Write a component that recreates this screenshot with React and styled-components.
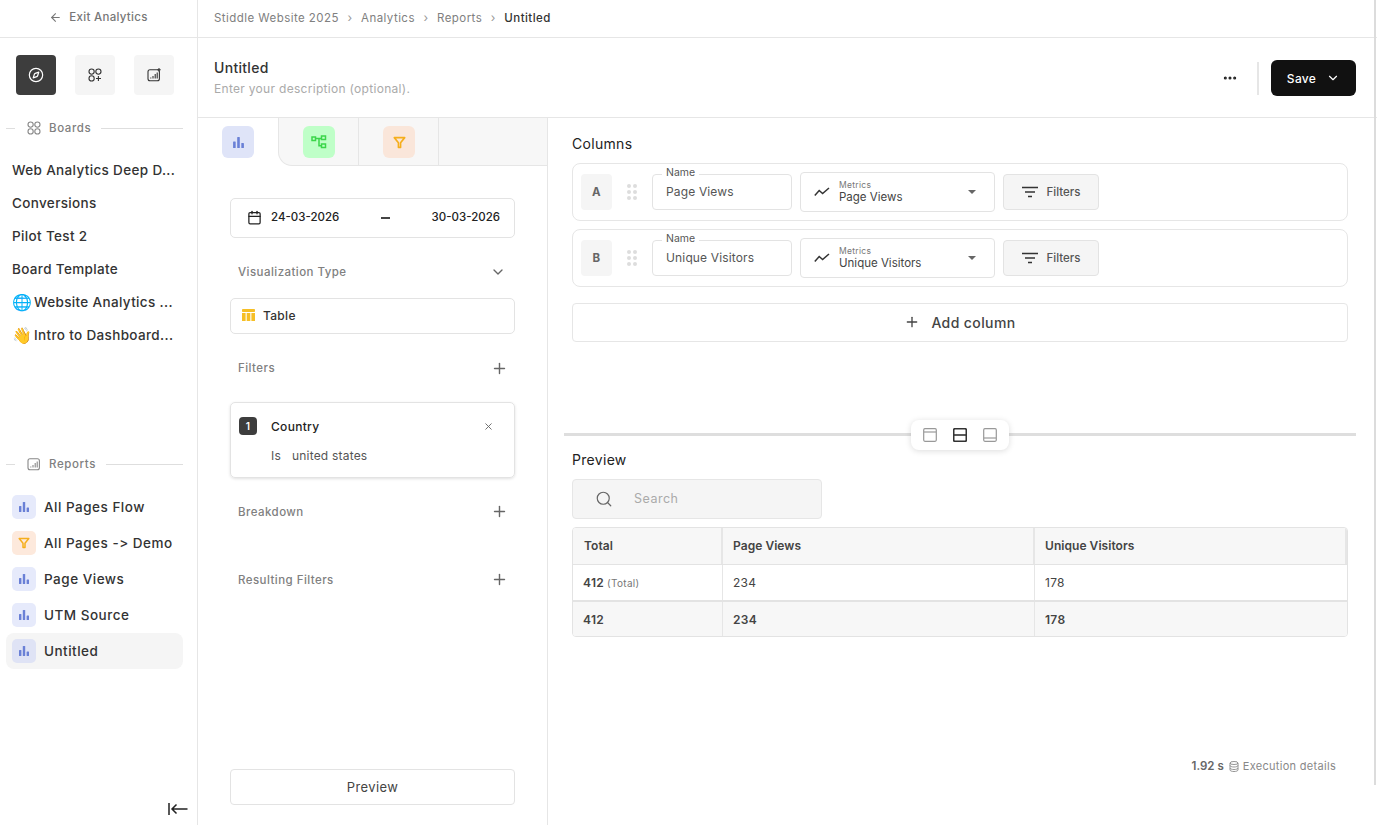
import styled, { createGlobalStyle } from "styled-components";
import { Compass, ArrowLeft, ChevronDown, Plus, X, Search, Calendar, Ellipsis } from "lucide-react";

const GlobalStyle = createGlobalStyle`
    html, body {
        margin:0;
        padding:0;
        height:100%;
        background:#fff;
    }
    body {
        font-family:Inter, "Open Sans", sans-serif;
        color:#1c1c1c;
        font-size:12px;
        letter-spacing:0.3px;
    }
    * {
        box-sizing:border-box;
    }
`;

const Page = styled.div`
    position:relative;
    display:flex;
    width:100%;
    height:825px;
    overflow:hidden;
`;

const Scrollbar = styled.div`
    position:absolute;
    top:0;
    right:1px;
    width:2px;
    height:785px;
    background:#dcdcdc;
`;

/* sidebar */
const Sidebar = styled.aside`
    width:198px;
    flex:none;
    display:flex;
    flex-direction:column;
    border-right:1px solid #e6e6e6;
    padding-bottom:6px;
`;

const ExitRow = styled.div`
    height:38px;
    flex:none;
    display:flex;
    align-items:center;
    justify-content:center;
    gap:7px;
    padding-bottom:3px;
    color:#777;
    font-size:11.5px;
    font-weight:500;
    border-bottom:1px solid #e6e6e6;
`;

const ModeRow = styled.div`
    display:flex;
    gap:19px;
    padding:17px 0 0 16px;
`;

const ModeButton = styled.div`
    width:40px;
    height:40px;
    border-radius:4px;
    display:flex;
    align-items:center;
    justify-content:center;
    background:${p => (p.$active ? "#3d3d3d" : "#f5f5f5")};
    color:${p => (p.$active ? "#fff" : "#333")};
`;

const SectionHead = styled.div`
    display:flex;
    align-items:center;
    height:18px;
    margin:${p => p.$margin};
    padding:0 14px 0 6px;
    color:#808080;
    font-size:11.5px;
    font-weight:500;
    letter-spacing:0.6px;

    &::before {
        content:"";
        width:9px;
        height:1px;
        background:#dedede;
        margin-right:12px;
    }
    &::after {
        content:"";
        flex:1;
        height:1px;
        background:#dedede;
        margin-left:10px;
    }
    svg {
        margin-right:8px;
    }
`;

const BoardList = styled.div`
    display:flex;
    flex-direction:column;
    margin-top:16px;
    padding-left:12px;
`;

const BoardItem = styled.div`
    height:33px;
    display:flex;
    align-items:center;
    font-size:13.5px;
    font-weight:500;
    letter-spacing:0.35px;
    color:#333;
    white-space:nowrap;
`;

const BoardEmoji = styled.span`
    width:22px;
    flex:none;
    font-size:16px;
    letter-spacing:0;
`;

const ReportList = styled.div`
    display:flex;
    flex-direction:column;
    margin-top:16px;
    padding:0 14px 0 6px;
`;

const ReportItem = styled.div`
    height:36px;
    display:flex;
    align-items:center;
    gap:8px;
    padding-left:6px;
    border-radius:8px;
    font-size:13.5px;
    font-weight:500;
    letter-spacing:0.5px;
    color:#333;
    background:${p => (p.$active ? "#f5f5f5" : "transparent")};
`;

const TypeIcon = styled.span`
    width:${p => p.$size}px;
    height:${p => p.$size}px;
    flex:none;
    display:flex;
    align-items:center;
    justify-content:center;
    border-radius:${p => (p.$size > 24 ? 6 : 5)}px;
    background:${p => p.$bg};
`;

const CollapseButton = styled.div`
    margin-top:auto;
    align-self:flex-end;
    margin-right:9px;
    height:20px;
    display:flex;
    align-items:center;
`;

/* main column */
const Main = styled.main`
    flex:1;
    min-width:0;
    display:flex;
    flex-direction:column;
`;

const Breadcrumbs = styled.nav`
    height:38px;
    flex:none;
    display:flex;
    align-items:center;
    gap:7.5px;
    padding:0 16px 2px;
    border-bottom:1px solid #e6e6e6;
    color:#808080;
    font-size:11.5px;
    font-weight:400;
    letter-spacing:0.45px;

    b {
        color:#333;
        font-weight:500;
    }
`;

const Crumb = styled.span`
    color:#999;
    font-size:12px;
    margin:0 1px;
`;

const TitleBar = styled.header`
    height:80px;
    flex:none;
    display:flex;
    align-items:center;
    padding:1px 21px 0 16px;
    border-bottom:1px solid #e6e6e6;
`;

const TitleText = styled.div`
    flex:1;

    h1 {
        margin:0 0 4px;
        font-size:14px;
        line-height:18px;
        font-weight:500;
        color:#333;
    }
    p {
        margin:0;
        font-size:12px;
        line-height:16px;
        color:#aaa;
    }
`;

const TitleDivider = styled.span`
    width:2px;
    height:33px;
    margin:0 12px 0 19px;
    background:#e6e6e6;
`;

const SaveButton = styled.button`
    width:85px;
    height:36px;
    border:none;
    border-radius:6px;
    background:#111;
    color:#fff;
    display:flex;
    align-items:center;
    justify-content:center;
    gap:10px;
    font:500 12px Inter, sans-serif;
    letter-spacing:0.3px;
`;

const Body = styled.div`
    flex:1;
    min-height:0;
    display:flex;
`;

/* config panel */
const ConfigPanel = styled.section`
    width:350px;
    flex:none;
    display:flex;
    flex-direction:column;
    border-right:1px solid #e6e6e6;
`;

const Tabs = styled.div`
    height:48px;
    flex:none;
    display:flex;
    background:#fff;
`;

const Tab = styled.div`
    width:${p => p.$width}px;
    display:flex;
    align-items:flex-start;
    padding:8px 0 0 ${p => p.$pad}px;
    background:${p => (p.$active ? "#fff" : "#f7f7f7")};
    border-bottom:${p => (p.$active ? "none" : "1px solid #e6e6e6")};
    border-right:${p => (p.$active ? "none" : "1px solid #e6e6e6")};
    border-left:${p => (p.$first ? "1px solid #e6e6e6" : "none")};
    border-bottom-left-radius:${p => (p.$first ? "14px" : "0")};
`;

const TabFill = styled.div`
    flex:1;
    background:#f7f7f7;
    border-bottom:1px solid #e6e6e6;
`;

const ConfigBody = styled.div`
    flex:1;
    min-height:0;
    display:flex;
    flex-direction:column;
    padding:32px 32px 20px;
`;

const DateBox = styled.div`
    height:40px;
    flex:none;
    display:flex;
    align-items:center;
    padding:0 14px 2px 16px;
    border:1px solid #e3e3e3;
    border-radius:5px;
    font-size:11.5px;
    font-weight:500;
    letter-spacing:0;
    color:#222;

    span:nth-of-type(1) {
        margin-left:9px;
    }
    i {
        width:9px;
        height:2px;
        margin:2px auto 0;
        background:#444;
    }
`;

const SectionRow = styled.div`
    height:${p => p.$height}px;
    flex:none;
    display:flex;
    align-items:center;
    justify-content:space-between;
    padding:${p => p.$top || 0}px 7px 0 8px;
    color:#808080;
    font-size:11.5px;
    font-weight:500;
    letter-spacing:0.45px;
`;

const RowChevron = styled(ChevronDown)`
    margin-right:2px;
    color:#666;
`;

const TableBox = styled.div`
    height:36px;
    flex:none;
    display:flex;
    align-items:center;
    gap:8px;
    padding:0 0 2px 11px;
    border:1px solid #e3e3e3;
    border-radius:5px;
    font-size:12px;
    font-weight:500;
    color:#333;
`;

const FilterCard = styled.div`
    height:76px;
    flex:none;
    padding:14px 20px 0 8px;
    border:1px solid #e3e3e3;
    border-radius:5px;
    box-shadow:0 1px 3px rgba(0,0,0,0.12);
`;

const FilterHead = styled.div`
    display:flex;
    align-items:center;
    height:18px;
    font-size:12px;
    font-weight:500;
    color:#222;

    svg {
        margin-left:auto;
        color:#666;
    }
`;

const Badge = styled.span`
    width:18px;
    height:18px;
    margin-right:14px;
    border-radius:4px;
    background:#3d3d3d;
    color:#fff;
    font-size:10px;
    font-weight:600;
    display:flex;
    align-items:center;
    justify-content:center;
`;

const FilterValue = styled.div`
    margin:13px 0 0 32px;
    font-size:12px;
    line-height:16px;
    letter-spacing:0.2px;
    color:#555;

    span {
        margin-right:11px;
    }
`;

const OutlineButton = styled.div`
    margin-top:auto;
    height:36px;
    flex:none;
    display:flex;
    align-items:center;
    justify-content:center;
    border:1px solid #e3e3e3;
    border-radius:4px;
    font-size:13px;
    letter-spacing:0.4px;
    color:#444;
`;

/* right side */
const Workspace = styled.section`
    flex:1;
    min-width:0;
    display:flex;
    flex-direction:column;
`;

const ColumnsPane = styled.div`
    height:315px;
    flex:none;
    padding:16px 29px 0 24px;
`;

const PaneTitle = styled.h2`
    margin:0;
    font-size:14px;
    line-height:20px;
    font-weight:400;
    color:#222;
`;

const ColumnRow = styled.div`
    height:58px;
    margin-top:${p => p.$top}px;
    display:flex;
    align-items:center;
    padding:0 0 0 8px;
    border:1px solid #e6e6e6;
    border-radius:8px;
`;

const LetterBox = styled.span`
    width:31px;
    height:36px;
    border-radius:4px;
    background:#f5f5f5;
    color:#666;
    font-size:11.5px;
    font-weight:700;
    display:flex;
    align-items:center;
    justify-content:center;
`;

const Grip = styled.span`
    width:10px;
    margin:0 15px;
    display:grid;
    grid-template-columns:repeat(2,4px);
    gap:2px;

    i {
        width:4px;
        height:4px;
        border-radius:50%;
        background:#ddd;
    }
`;

const NameField = styled.div`
    position:relative;
    width:140px;
    height:36px;
    display:flex;
    align-items:center;
    padding:0 0 1px 13px;
    border:1px solid #e3e3e3;
    border-radius:4px;
    font-size:12px;
    letter-spacing:0.15px;
    color:#555;
`;

const FieldLegend = styled.span`
    position:absolute;
    top:-9px;
    left:9px;
    padding:0 4px;
    background:#fff;
    font-size:10.5px;
    line-height:13px;
    letter-spacing:0;
    color:#555;
`;

const MetricField = styled.div`
    width:195px;
    height:40px;
    margin-left:8px;
    display:flex;
    align-items:center;
    padding:0 18px 0 13px;
    border:1px solid #e3e3e3;
    border-radius:4px;

    div {
        margin-left:9px;
        flex:1;
    }
    small {
        display:block;
        font-size:8.5px;
        line-height:10px;
        color:#777;
    }
    span {
        display:block;
        font-size:11.5px;
        line-height:14px;
        letter-spacing:0;
        color:#444;
    }
    em {
        width:0;
        height:0;
        border-left:4px solid transparent;
        border-right:4px solid transparent;
        border-top:4px solid #666;
    }
`;

const FilterButton = styled.div`
    width:96px;
    height:36px;
    margin-left:8px;
    display:flex;
    align-items:center;
    justify-content:center;
    gap:9px;
    border:1px solid #e3e3e3;
    border-radius:4px;
    background:#f5f5f5;
    font-size:11.5px;
    font-weight:500;
    letter-spacing:0;
    color:#555;
`;

const AddColumn = styled.div`
    height:39px;
    margin-top:16px;
    display:flex;
    align-items:center;
    justify-content:center;
    gap:11px;
    padding-bottom:1px;
    border:1px solid #e6e6e6;
    border-radius:4px;
    font-size:14px;
    font-weight:500;
    letter-spacing:0.4px;
    color:#444;
`;

const SplitBar = styled.div`
    position:relative;
    height:3px;
    margin:0 21px 0 16px;
    flex:none;
    background:#dedede;
`;

const SplitToggle = styled.div`
    position:absolute;
    left:347px;
    top:-13px;
    width:98px;
    height:30px;
    display:flex;
    align-items:center;
    justify-content:center;
    gap:16px;
    background:#fff;
    border-radius:8px;
    box-shadow:0 1px 6px rgba(0,0,0,0.14);
`;

const PreviewPane = styled.div`
    flex:1;
    min-height:0;
    display:flex;
    flex-direction:column;
    padding:14px 29px 51px 24px;
`;

const SearchBox = styled.div`
    width:250px;
    height:40px;
    margin-top:9px;
    flex:none;
    display:flex;
    align-items:center;
    padding:0 0 1px 22px;
    gap:21px;
    border:1px solid #e6e6e6;
    border-radius:4px;
    background:#f5f5f5;
    color:#aaa;
    font-size:12.5px;
    letter-spacing:0.5px;

    svg {
        color:#666;
    }
`;

const DataTable = styled.div`
    margin-top:8px;
    flex:none;
    border:1px solid #e3e3e3;
    border-radius:4px;
    overflow:hidden;
`;

const DataRow = styled.div`
    display:grid;
    grid-template-columns:149px 312px 1fr;
    height:${p => p.$height}px;
    background:${p => (p.$shaded ? "#f7f7f7" : "#fff")};
    border-bottom:${p => p.$rule || "none"};
`;

const DataCell = styled.div`
    display:flex;
    align-items:center;
    gap:3px;
    padding-left:10px;
    font-size:12px;
    font-weight:${p => (p.$bold ? 600 : 400)};
    color:#444;
    border-left:${p => (p.$first ? "none" : "1px solid #e6e6e6")};

    small {
        font-size:10px;
        font-weight:400;
        color:#777;
    }
`;

const HeadCell = styled.div`
    display:flex;
    align-items:center;
    margin-left:${p => (p.$first ? 0 : -1)}px;
    padding:0 0 2px ${p => (p.$first ? 11 : 10)}px;
    font-size:12px;
    font-weight:600;
    letter-spacing:0.05px;
    color:#444;
    border-left:${p => (p.$first ? "none" : "2px solid #e6e6e6")};
    border-right:${p => (p.$last ? "2px solid #e6e6e6" : "none")};
`;

const ExecFooter = styled.div`
    margin-top:auto;
    padding-right:12px;
    display:flex;
    justify-content:flex-end;
    align-items:center;
    height:16px;
    color:#888;
    font-size:11px;

    b {
        margin-right:5px;
        font-size:11.5px;
        font-weight:600;
        letter-spacing:0;
        color:#666;
    }
    svg {
        margin-right:4px;
    }
`;

/* drawn icons */
function BarsIcon({ color = "#6a80d6", size = 12 }) {
    return (
        <svg width={size} height={size} viewBox="0 0 12 12" fill={color}>
            <rect x="1" y="5" width="2.4" height="6" rx="0.5" />
            <rect x="4.8" y="1" width="2.4" height="10" rx="0.5" />
            <rect x="8.6" y="6.5" width="2.4" height="4.5" rx="0.5" />
        </svg>
    );
}

function FunnelIcon({ size = 12 }) {
    return (
        <svg width={size} height={size} viewBox="0 0 12 12" fill="none" stroke="#f5ae1c" strokeWidth="1.5" strokeLinejoin="round">
            <path d="M1.2 1.5h9.6L7 6.2V10.5H5V6.2z" />
        </svg>
    );
}

function FlowIcon() {
    return (
        <svg width="16" height="14" viewBox="0 0 16 14" fill="none" stroke="#3bd64a" strokeWidth="1.5">
            <rect x="1" y="2" width="3.5" height="3.5" />
            <rect x="10.5" y="1" width="4" height="3.5" />
            <rect x="10.5" y="9" width="4" height="3.5" />
            <path d="M4.5 3.5h6M8 3.5v7.2h2.5" />
        </svg>
    );
}

function CirclesIcon({ size = 14, color = "currentColor", plus = false }) {
    return (
        <svg width={size} height={size} viewBox="0 0 14 14" fill="none" stroke={color} strokeWidth="1.1">
            <circle cx="3.6" cy="3.6" r="2.6" />
            <circle cx="10.4" cy="3.6" r="2.6" />
            <circle cx="3.6" cy="10.4" r="2.6" />
            {plus
                ? <path d="M10.4 8v5M8 10.5h5" />
                : <circle cx="10.4" cy="10.4" r="2.6" />}
        </svg>
    );
}

function ChartBoxIcon({ size = 14, color = "currentColor", plus = false }) {
    return (
        <svg width={size} height={size} viewBox="0 0 14 14" fill="none" stroke={color} strokeWidth="1.1">
            <rect x="1" y="1.8" width="11.4" height="11" rx="2" />
            <path d="M3.8 10.5v-1M6 10.5V8M8.2 10.5V6M10.2 10.5V4.4" />
            {plus && <path d="M12 0v3.4M10.3 1.7h3.4" />}
        </svg>
    );
}

function CollapseIcon() {
    return (
        <svg width="20" height="12" viewBox="0 0 20 12" fill="none" stroke="#222" strokeWidth="1.5">
            <path d="M1 0v12M19.5 6H4M8.5 1.5 4 6l4.5 4.5" />
        </svg>
    );
}

function TableIcon() {
    return (
        <svg width="13" height="12" viewBox="0 0 13 12" fill="#f6bf26">
            <rect width="13" height="3" rx="0.8" />
            <rect y="4" width="3.6" height="8" />
            <rect x="4.7" y="4" width="3.6" height="8" />
            <rect x="9.4" y="4" width="3.6" height="8" />
        </svg>
    );
}

function TrendIcon() {
    return (
        <svg width="16" height="10" viewBox="0 0 16 10" fill="none" stroke="#333" strokeWidth="1.5">
            <path d="M.8 8.5 5.2 3.5l3.4 3L15 1" />
        </svg>
    );
}

function FilterLines() {
    return (
        <svg width="16" height="12" viewBox="0 0 16 12" fill="none" stroke="#333" strokeWidth="1.4">
            <path d="M0 1.5h16M3 6h10M6 10.5h4" />
        </svg>
    );
}

function PaneIcon({ split, color }) {
    const y = split === "top" ? 4 : split === "bottom" ? 10 : 7;
    return (
        <svg width="14" height="14" viewBox="0 0 14 14" fill="none" stroke={color} strokeWidth={split === "middle" ? 1.6 : 1.2}>
            <rect x="0.7" y="0.7" width="12.6" height="12.6" rx="1.2" />
            <path d={`M1 ${y}h12`} />
        </svg>
    );
}

function DatabaseIcon() {
    return (
        <svg width="10" height="11" viewBox="0 0 10 11" fill="none" stroke="#888" strokeWidth="0.9">
            <ellipse cx="5" cy="2" rx="4" ry="1.5" />
            <path d="M1 2v7c0 .8 1.8 1.5 4 1.5S9 9.8 9 9V2M1 4.5c0 .8 1.8 1.5 4 1.5s4-.7 4-1.5M1 7c0 .8 1.8 1.5 4 1.5S9 7.8 9 7" />
        </svg>
    );
}

const boards = [
    { name: "Web Analytics Deep D..." },
    { name: "Conversions" },
    { name: "Pilot Test 2" },
    { name: "Board Template" },
    { emoji: "🌐", name: "Website Analytics ..." },
    { emoji: "👋", name: "Intro to Dashboard..." },
];

const reports = [
    { name: "All Pages Flow", kind: "bars" },
    { name: "All Pages -> Demo", kind: "funnel" },
    { name: "Page Views", kind: "bars" },
    { name: "UTM Source", kind: "bars" },
    { name: "Untitled", kind: "bars", active: true },
];

const columns = [
    { letter: "A", name: "Page Views", top: 9 },
    { letter: "B", name: "Unique Visitors", top: 8 },
];

function App() {
    return (
        <Page>
            <GlobalStyle />
            <Sidebar>
                <ExitRow><ArrowLeft size={13} /> Exit Analytics</ExitRow>
                <ModeRow>
                    <ModeButton $active><Compass size={16} strokeWidth={1.8} /></ModeButton>
                    <ModeButton><CirclesIcon plus /></ModeButton>
                    <ModeButton><ChartBoxIcon plus /></ModeButton>
                </ModeRow>
                <SectionHead $margin="24px 0 0"><CirclesIcon color="#888" />Boards</SectionHead>
                <BoardList>
                    {boards.map(b => (
                        <BoardItem key={b.name}>
                            {b.emoji && <BoardEmoji>{b.emoji}</BoardEmoji>}
                            {b.name}
                        </BoardItem>
                    ))}
                </BoardList>
                <SectionHead $margin="104px 0 0"><ChartBoxIcon color="#888" />Reports</SectionHead>
                <ReportList>
                    {reports.map(r => (
                        <ReportItem key={r.name} $active={r.active}>
                            <TypeIcon $size={24} $bg={r.kind === "funnel" ? "#fde9dc" : r.active ? "#dfe3f5" : "#e6eafb"}>
                                {r.kind === "funnel" ? <FunnelIcon /> : <BarsIcon />}
                            </TypeIcon>
                            {r.name}
                        </ReportItem>
                    ))}
                </ReportList>
                <CollapseButton><CollapseIcon /></CollapseButton>
            </Sidebar>

            <Main>
                <Breadcrumbs>
                    <span>Stiddle Website 2025</span><Crumb>›</Crumb>
                    <span>Analytics</span><Crumb>›</Crumb>
                    <span>Reports</span><Crumb>›</Crumb>
                    <b>Untitled</b>
                </Breadcrumbs>
                <TitleBar>
                    <TitleText>
                        <h1>Untitled</h1>
                        <p>Enter your description (optional).</p>
                    </TitleText>
                    <Ellipsis size={16} color="#222" strokeWidth={2.6} />
                    <TitleDivider />
                    <SaveButton>Save <ChevronDown size={14} /></SaveButton>
                </TitleBar>
                <Body>
                    <ConfigPanel>
                        <Tabs>
                            <Tab $active $width={80} $pad={24}>
                                <TypeIcon $size={32} $bg="#dfe4f8"><BarsIcon size={13} /></TypeIcon>
                            </Tab>
                            <Tab $first $width={81} $pad={24}>
                                <TypeIcon $size={32} $bg="#bfffc8"><FlowIcon /></TypeIcon>
                            </Tab>
                            <Tab $width={80} $pad={24}>
                                <TypeIcon $size={32} $bg="#fae6da"><FunnelIcon size={13} /></TypeIcon>
                            </Tab>
                            <TabFill />
                        </Tabs>
                        <ConfigBody>
                            <DateBox>
                                <Calendar size={15} color="#222" />
                                <span>24-03-2026</span>
                                <i />
                                <span>30-03-2026</span>
                            </DateBox>
                            <SectionRow $height={60} $top={8}>Visualization Type <RowChevron size={16} /></SectionRow>
                            <TableBox><TableIcon />Table</TableBox>
                            <SectionRow $height={68}>Filters <Plus size={17} color="#666" /></SectionRow>
                            <FilterCard>
                                <FilterHead><Badge>1</Badge>Country<X size={11} /></FilterHead>
                                <FilterValue><span>Is</span>united states</FilterValue>
                            </FilterCard>
                            <SectionRow $height={67}>Breakdown <Plus size={17} color="#666" /></SectionRow>
                            <SectionRow $height={69}>Resulting Filters <Plus size={17} color="#666" /></SectionRow>
                            <OutlineButton>Preview</OutlineButton>
                        </ConfigBody>
                    </ConfigPanel>

                    <Workspace>
                        <ColumnsPane>
                            <PaneTitle>Columns</PaneTitle>
                            {columns.map(c => (
                                <ColumnRow key={c.letter} $top={c.top}>
                                    <LetterBox>{c.letter}</LetterBox>
                                    <Grip>{Array.from({ length: 6 }, (_, i) => <i key={i} />)}</Grip>
                                    <NameField><FieldLegend>Name</FieldLegend>{c.name}</NameField>
                                    <MetricField>
                                        <TrendIcon />
                                        <div><small>Metrics</small><span>{c.name}</span></div>
                                        <em />
                                    </MetricField>
                                    <FilterButton><FilterLines />Filters</FilterButton>
                                </ColumnRow>
                            ))}
                            <AddColumn><Plus size={16} />Add column</AddColumn>
                        </ColumnsPane>
                        <SplitBar>
                            <SplitToggle>
                                <PaneIcon split="top" color="#999" />
                                <PaneIcon split="middle" color="#333" />
                                <PaneIcon split="bottom" color="#999" />
                            </SplitToggle>
                        </SplitBar>
                        <PreviewPane>
                            <PaneTitle>Preview</PaneTitle>
                            <SearchBox><Search size={18} strokeWidth={1.6} />Search</SearchBox>
                            <DataTable>
                                <DataRow $height={37} $shaded $rule="1px solid #e3e3e3">
                                    <HeadCell $first>Total</HeadCell>
                                    <HeadCell>Page Views</HeadCell>
                                    <HeadCell $last>Unique Visitors</HeadCell>
                                </DataRow>
                                <DataRow $height={37} $rule="2px solid #e3e3e3">
                                    <DataCell $first $bold>412 <small>(Total)</small></DataCell>
                                    <DataCell>234</DataCell>
                                    <DataCell>178</DataCell>
                                </DataRow>
                                <DataRow $height={34} $shaded>
                                    <DataCell $first $bold>412</DataCell>
                                    <DataCell $bold>234</DataCell>
                                    <DataCell $bold>178</DataCell>
                                </DataRow>
                            </DataTable>
                            <ExecFooter><b>1.92 s</b><DatabaseIcon />Execution details</ExecFooter>
                        </PreviewPane>
                    </Workspace>
                </Body>
            </Main>
            <Scrollbar />
        </Page>
    );
}

export default App;
